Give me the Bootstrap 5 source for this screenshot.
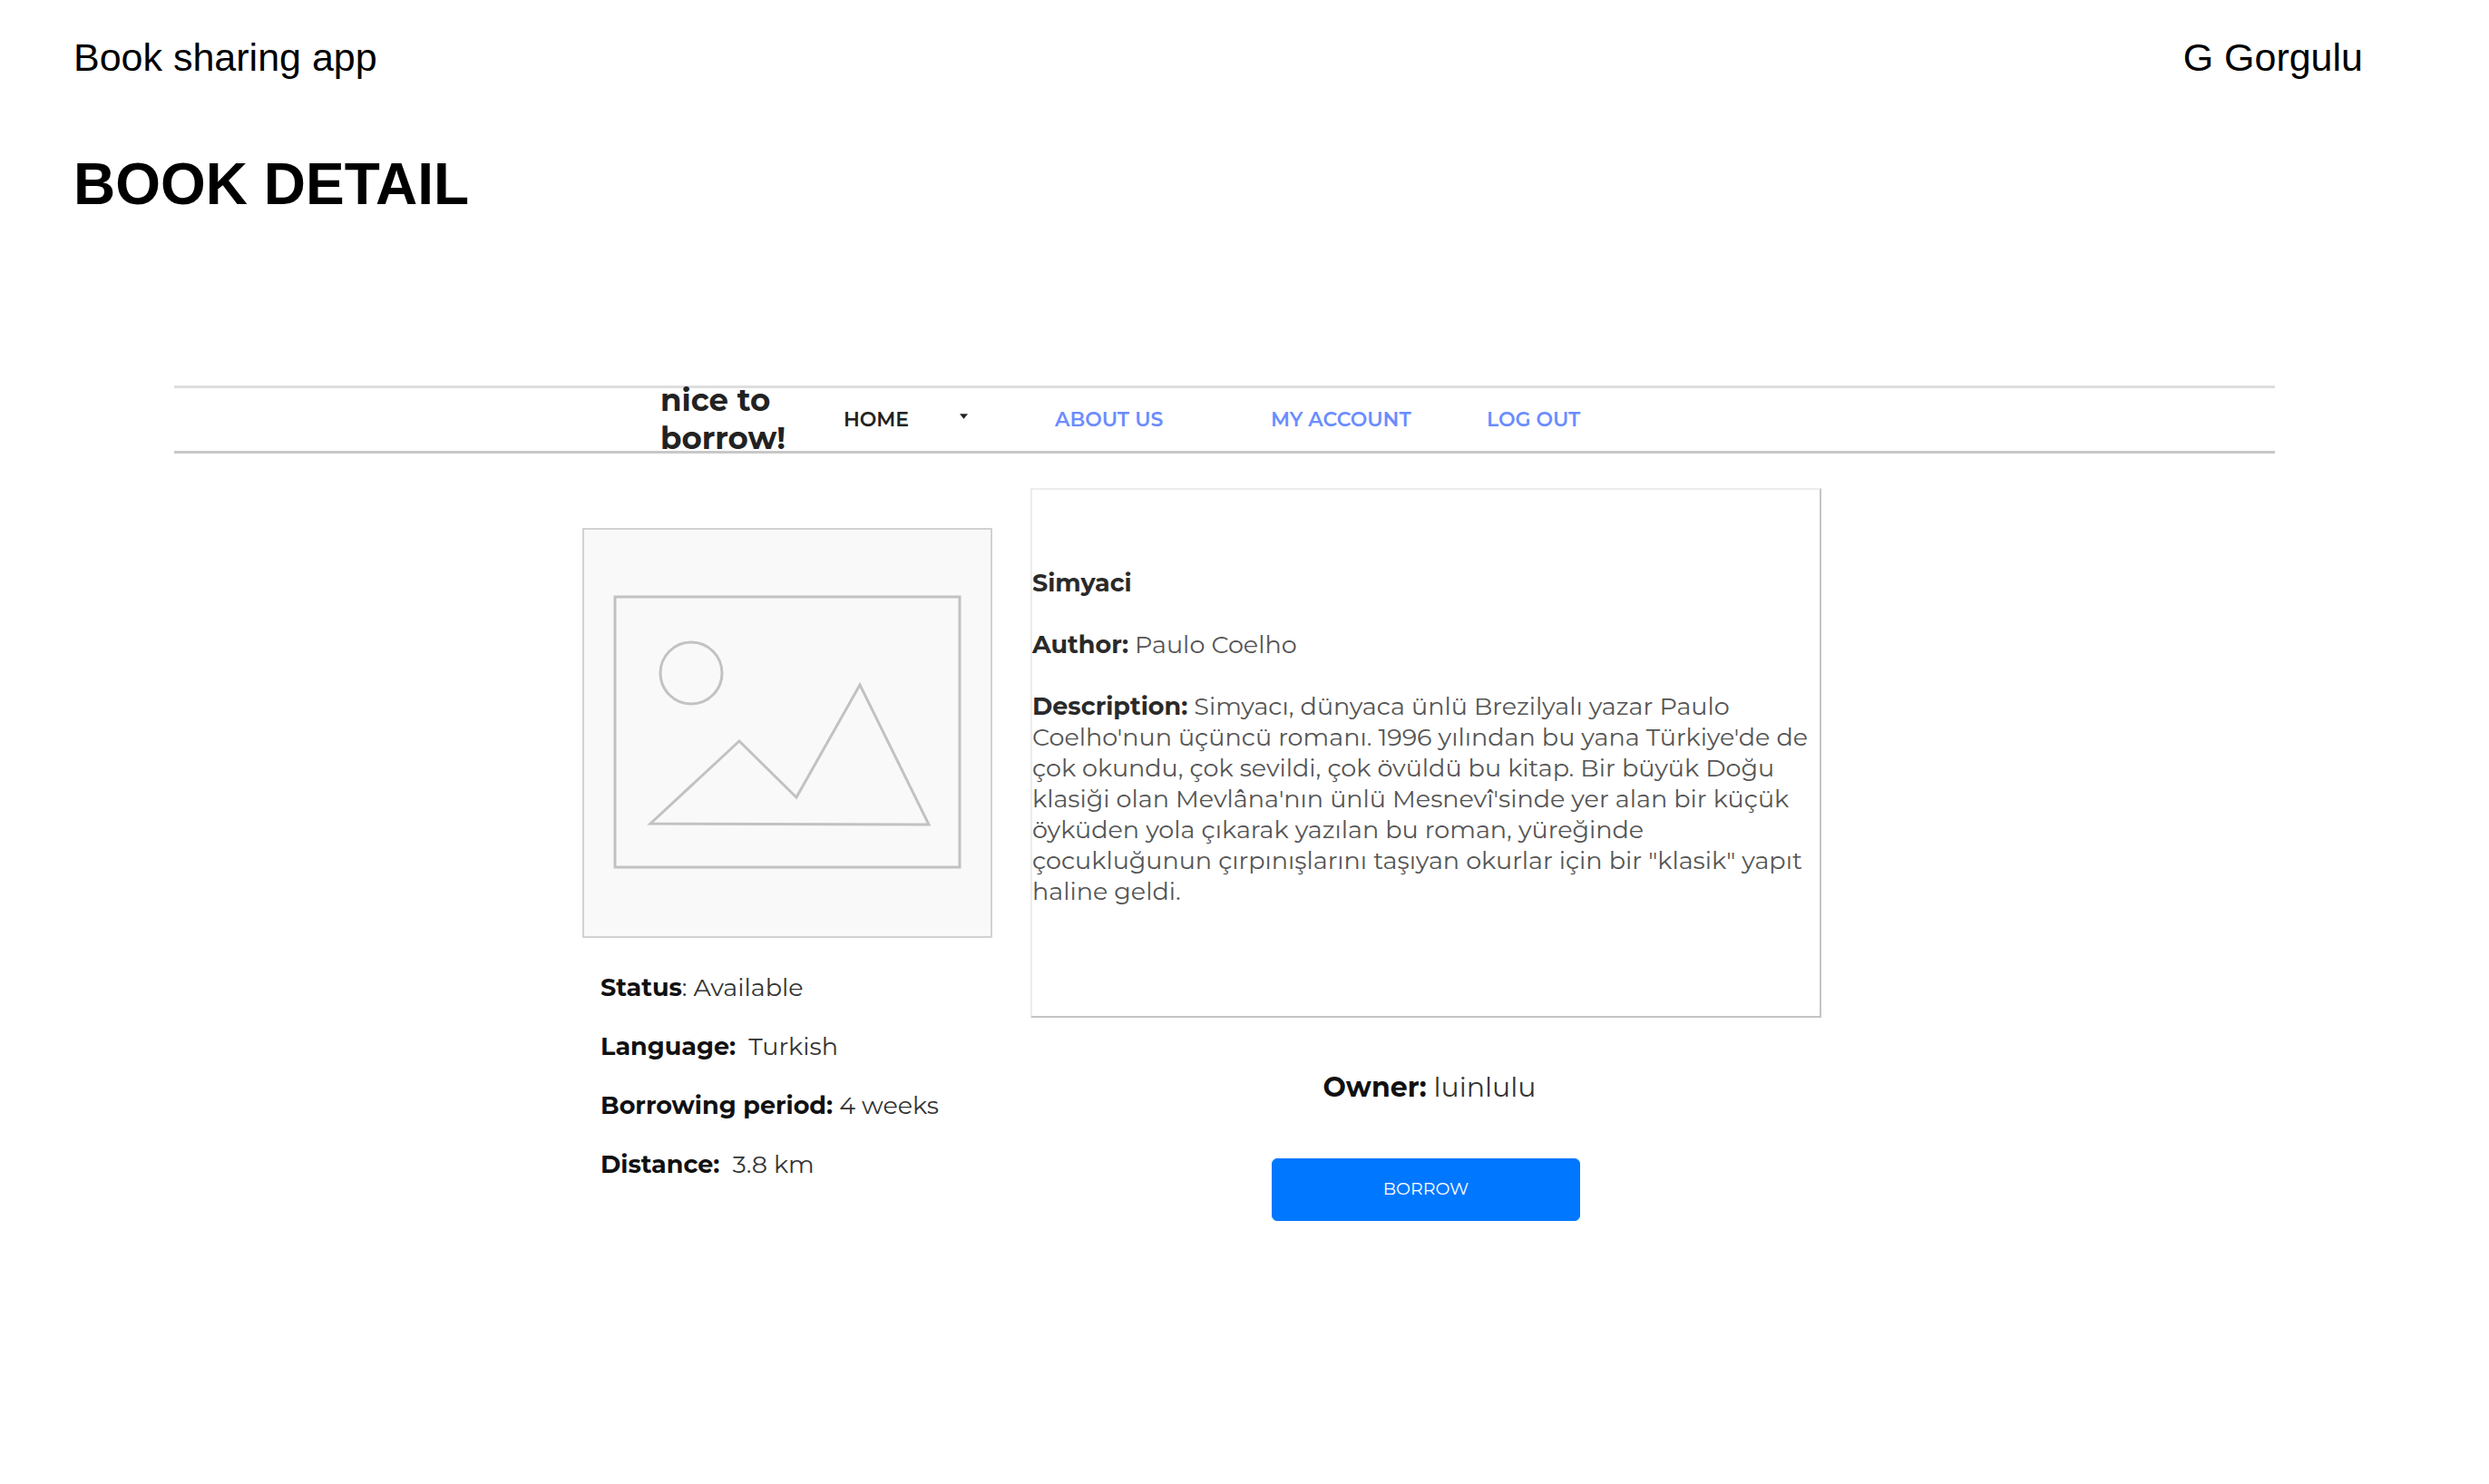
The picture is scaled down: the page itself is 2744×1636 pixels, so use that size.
<!DOCTYPE html>
<html lang="en">
<head>
<meta charset="utf-8">
<meta name="viewport" content="width=device-width, initial-scale=1">
<title>Book sharing app – Book detail</title>
<link href="https://cdn.jsdelivr.net/npm/bootstrap@5.3.0/dist/css/bootstrap.min.css" rel="stylesheet">
<style>
body { font-family: "Liberation Sans", Arial, sans-serif; color: #000; background: #fff; }
.page-head { padding: 38px 139px 0 81px; font-size: 43px; line-height: 50px; }
.page-title { margin: 78px 0 0 81px; font-size: 64px; line-height: 74px; font-weight: 700; }
.wireframe { margin: 185px 236px 0 192px; font-family: Montserrat, Inter, sans-serif; font-size: 27px; line-height: 34px; }
.site-nav { border-top: 3px solid #dedede; border-bottom: 3px solid #c8c8c8; padding: 0 0 0 536px; height: 75px; }
.site-brand { width: 202px; padding-bottom: 2px; font-size: 34px; line-height: 42px; font-weight: 700; color: #222; text-decoration: none; }
.site-menu { font-size: 22px; line-height: 28px; font-weight: 600; }
.site-menu a { color: #6b8cff; text-decoration: none; }
.menu-slot { width: 238px; }
.menu-home { width: 233px; padding-right: 96px; }
.menu-home button { font-size: inherit; line-height: inherit; font-weight: 600; color: #222; }
.caret { width: 9px; height: 6px; margin-bottom: 8px; }
.book { padding: 38px 0 0 450px; gap: 42px; }
.cover-col { flex: 0 0 452px; padding-top: 44px; }
.cover { border: 2px solid #d2d2d2; background: #f9f9f9; }
.facts { padding: 38px 0 0 20px; gap: 31px; color: #333; }
.facts strong, .owner strong { color: #111; font-weight: 700; }
.info-col { flex: 0 1 872px; }
.info { border: 2px solid #ececec; border-right-color: #c4c4c4; border-bottom-color: #c4c4c4; padding: 86px 0 120px; color: #555; }
.info strong { color: #2a2a2a; }
.info p { margin-bottom: 34px; }
.owner { margin-top: 57px; padding-left: 8px; font-size: 30px; line-height: 40px; color: #333; }
.borrow { margin-top: 58px; width: 340px; height: 69px; border-radius: 6px; font-size: 19px; --bs-btn-bg: #0077ff; --bs-btn-border-color: #0077ff; }
</style>
</head>
<body>
<header class="page-head d-flex justify-content-between">
  <span>Book sharing app</span>
  <span>G Gorgulu</span>
</header>
<h1 class="page-title">BOOK DETAIL</h1>

<main class="wireframe">
  <nav class="site-nav d-flex align-items-center" aria-label="Main">
    <a class="site-brand" href="#">nice to<br>borrow!</a>
    <ul class="site-menu list-unstyled d-flex mb-0">
      <li class="menu-home">
        <button type="button" class="btn p-0 border-0 w-100 d-flex justify-content-between align-items-center" aria-haspopup="true">
          HOME
          <svg class="caret" viewBox="0 0 10 6" aria-hidden="true"><path d="M0 0h10L5 6z" fill="#222"/></svg>
        </button>
      </li>
      <li class="menu-slot"><a href="#">ABOUT US</a></li>
      <li class="menu-slot"><a href="#">MY ACCOUNT</a></li>
      <li><a href="#">LOG OUT</a></li>
    </ul>
  </nav>

  <div class="book d-flex align-items-start">
    <section class="cover-col">
      <svg class="cover d-block w-100" viewBox="0 0 448 448" fill="none" stroke="#c2c2c2" stroke-width="3" role="img" aria-label="Book cover placeholder">
        <rect x="34" y="74" width="380" height="298"/>
        <circle cx="118" cy="158" r="34"/>
        <path d="M73 324L171 233L234 295L304 171L380 325Z"/>
      </svg>
      <div class="facts d-flex flex-column">
        <div><strong>Status</strong>: Available</div>
        <div><strong>Language:</strong>&nbsp; Turkish</div>
        <div><strong>Borrowing period:</strong> 4 weeks</div>
        <div><strong>Distance:</strong>&nbsp; 3.8 km</div>
      </div>
    </section>
    <section class="info-col d-flex flex-column align-items-center">
      <article class="info w-100">
        <p><strong>Simyaci</strong></p>
        <p><strong>Author:</strong> Paulo Coelho</p>
        <p class="mb-0"><strong>Description:</strong> Simyacı, dünyaca ünlü Brezilyalı yazar Paulo Coelho'nun üçüncü romanı. 1996 yılından bu yana Türkiye'de de çok okundu, çok sevildi, çok övüldü bu kitap. Bir büyük Doğu klasiği olan Mevlâna'nın ünlü Mesnevî'sinde yer alan bir küçük öyküden yola çıkarak yazılan bu roman, yüreğinde çocukluğunun çırpınışlarını taşıyan okurlar için bir "klasik" yapıt haline geldi.</p>
      </article>
      <div class="owner"><strong>Owner:</strong> luinlulu</div>
      <button type="button" class="borrow btn btn-primary">BORROW</button>
    </section>
  </div>
</main>
<script src="https://cdn.jsdelivr.net/npm/bootstrap@5.3.0/dist/js/bootstrap.bundle.min.js"></script>
</body>
</html>
